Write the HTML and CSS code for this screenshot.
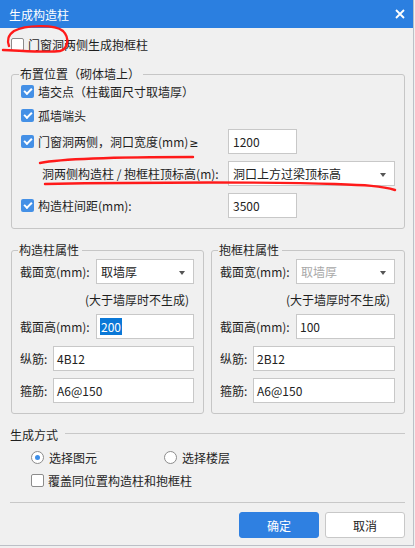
FILE: index.html
```html
<!DOCTYPE html>
<html lang="zh-CN">
<head>
<meta charset="UTF-8">
<title>生成构造柱</title>
<link rel="stylesheet" href="styles.css">
</head>
<body>
<div class="dialog">
  <!-- 标题栏 -->
  <div class="titlebar">
    <span>生成构造柱</span>
    <svg class="close" width="10" height="10" viewBox="0 0 10 10"><path d="M1 1L9 9M9 1L1 9" stroke="#fff" stroke-width="1.8"/></svg>
  </div>

  <div class="content">
    <div class="check top-check"><span class="box"></span>门窗洞两侧生成抱框柱</div>

    <!-- 布置位置 -->
    <fieldset class="group place">
      <legend>布置位置（砌体墙上）</legend>
      <div class="check row r1"><span class="box on"></span>墙交点（柱截面尺寸取墙厚）</div>
      <div class="check row r2"><span class="box on"></span>孤墙端头</div>
      <div class="field r3">
        <div class="check label-col"><span class="box on"></span><span>门窗洞两侧，洞口宽度(mm)<span class="ge">≥</span></span></div>
        <div class="input short">1200</div>
      </div>
      <div class="field">
        <div class="label-col sub">洞两侧构造柱 / 抱框柱顶标高(m):</div>
        <div class="select wide">洞口上方过梁顶标高<i class="arrow"></i></div>
      </div>
      <div class="field">
        <div class="check label-col"><span class="box on"></span>构造柱间距(mm):</div>
        <div class="input short">3500</div>
      </div>
    </fieldset>

    <!-- 属性 -->
    <div class="props">
      <fieldset class="group prop">
        <legend>构造柱属性</legend>
        <div class="pf"><span class="lbl">截面宽(mm):</span><div class="select">取墙厚<i class="arrow"></i></div></div>
        <div class="note">(大于墙厚时不生成)</div>
        <div class="pf"><span class="lbl">截面高(mm):</span><div class="input"><span class="sel">200</span></div></div>
        <div class="pf gap"><span class="lbl short">纵筋:</span><div class="input">4B12</div></div>
        <div class="pf gap"><span class="lbl short">箍筋:</span><div class="input">A6@150</div></div>
      </fieldset>
      <fieldset class="group prop">
        <legend>抱框柱属性</legend>
        <div class="pf"><span class="lbl">截面宽(mm):</span><div class="select disabled">取墙厚<i class="arrow"></i></div></div>
        <div class="note">(大于墙厚时不生成)</div>
        <div class="pf"><span class="lbl">截面高(mm):</span><div class="input">100</div></div>
        <div class="pf gap"><span class="lbl short">纵筋:</span><div class="input">2B12</div></div>
        <div class="pf gap"><span class="lbl short">箍筋:</span><div class="input">A6@150</div></div>
      </fieldset>
    </div>

    <!-- 生成方式 -->
    <div class="mode-title"><span>生成方式</span></div>
    <div class="radios">
      <div class="radio first"><span class="dot on"></span>选择图元</div>
      <div class="radio"><span class="dot"></span>选择楼层</div>
    </div>
    <div class="check cover"><span class="box"></span>覆盖同位置构造柱和抱框柱</div>

    <div class="sep"></div>
    <div class="buttons">
      <div class="btn primary">确定</div>
      <div class="btn">取消</div>
    </div>
  </div>

  <!-- 红色标注 -->
  <svg class="marks" width="414" height="548" viewBox="0 0 414 548">
    <path d="M3 50 C15 50 45 53 60 51 C68 49 70 38 63 31 C55 24 25 25 14 31 C8 35 7 41 9 46" fill="none" stroke="#ff1a1a" stroke-width="2.4" stroke-linecap="round"/>
    <path d="M40 163 C60 159 120 157 193 157" fill="none" stroke="#ff1a1a" stroke-width="2.4" stroke-linecap="round"/>
    <path d="M45 184 C150 182 280 182 335 184 C365 185 382 186 395 190" fill="none" stroke="#ff1a1a" stroke-width="2.4" stroke-linecap="round"/>
  </svg>
</div>
</body>
</html>
```

FILE: styles.css
```css
body {
  margin: 0;
  background: #f0f0f0;
  font-family: "Noto Sans CJK SC", "Microsoft YaHei", sans-serif;
  font-size: 12px;
  color: #1f1f1f;
}
.dialog {
  width: 414px;
  height: 546px;
  box-sizing: border-box;
  border-right: 1px solid #bcc0c7;
  border-bottom: 1px solid #bcc0c7;
  background: #f0f0f0;
  position: relative;
}
.titlebar {
  height: 28px;
  background: #2b7fe0;
  color: #fff;
  display: flex;
  align-items: center;
  justify-content: space-between;
  padding: 0 8px 0 9px;
}
.content {
  padding: 6px 8px 0 11px;
}

/* 复选框 */
.check {
  display: flex;
  align-items: center;
  gap: 4px;
}
.box {
  width: 13px;
  height: 13px;
  box-sizing: border-box;
  border: 1px solid #8c8c8c;
  border-radius: 2px;
  background: #fff;
  position: relative;
  flex: none;
}
.box.on {
  border: none;
  background: #4490e6;
}
.box.on::after {
  content: '';
  position: absolute;
  left: 3px;
  top: 3px;
  width: 6px;
  height: 3px;
  border-left: 2px solid #fff;
  border-bottom: 2px solid #fff;
  transform: rotate(-45deg);
}
.top-check { height: 20px; }
.ge {
  font-family: "DejaVu Sans", sans-serif;
  font-size: 11px;
  margin-left: 1px;
}

/* 分组框 */
.group {
  margin: 14px 0 0;
  padding: 0 9px 10px 9px;
  border: 1px solid #c6c6c6;
  border-radius: 3px;
  min-width: 0;
}
.group legend {
  line-height: 12px;
  padding: 0 3px 0 1px;
  margin-left: -2px;
}
.place .r1 { height: 23px; }
.place .r2 { height: 24px; }
.field {
  display: flex;
  align-items: center;
  height: 25px;
  margin-top: 7px;
}
.place .field.r3 { margin-top: 2px; }
.label-col {
  width: 207px;
  flex: none;
}
.label-col.sub { padding-left: 21px; box-sizing: border-box; }

.input, .select {
  height: 25px;
  box-sizing: border-box;
  border: 1px solid #c8c8c8;
  background: #fff;
  display: flex;
  align-items: center;
  padding-left: 3px;
  color: #222;
  flex: 1;
  min-width: 0;
}
.input.short { flex: none; width: 69px; padding-left: 4px; }
.select { position: relative; padding-left: 4px; }
.select.wide { flex: none; width: 167px; }
.select.disabled { color: #a8a8a8; }
.arrow {
  position: absolute;
  right: 8px;
  top: 11px;
  border-left: 3px solid transparent;
  border-right: 3px solid transparent;
  border-top: 4px solid #555;
}
.sel {
  background: #0a78d7;
  color: #fff;
  padding: 0 1px;
  line-height: 17px;
}

/* 属性 */
.props {
  display: grid;
  grid-template-columns: 193px 194px;
  column-gap: 7px;
  margin-top: 15px;
}
.props .group {
  margin: 0;
  padding: 3px 9px 10px 8px;
}
.pf {
  display: flex;
  align-items: center;
  height: 25px;
}
.pf.gap { margin-top: 7px; }
.lbl { width: 76px; flex: none; }
.lbl.short { width: 33px; }
.note {
  height: 30px;
  display: flex;
  align-items: center;
  justify-content: flex-end;
  padding-right: 5px;
}

/* 生成方式 */
.mode-title {
  display: flex;
  align-items: flex-start;
  margin: 13px 0 0 -1px;
  line-height: 16px;
}
.mode-title::after {
  content: '';
  flex: 1;
  border-top: 1px solid #c8c8c8;
  margin: 6px 0 0 7px;
}
.radios {
  display: flex;
  height: 20px;
  margin-top: 4px;
  padding-left: 20px;
}
.radio {
  display: flex;
  align-items: center;
  gap: 5px;
}
.radio.first { width: 133px; }
.dot {
  width: 13px;
  height: 13px;
  box-sizing: border-box;
  border: 1px solid #8c8c8c;
  border-radius: 50%;
  background: #fff;
  position: relative;
}
.dot.on::after {
  content: '';
  position: absolute;
  left: 3px;
  top: 3px;
  width: 5px;
  height: 5px;
  border-radius: 50%;
  background: #3d8ee8;
}
.cover {
  height: 20px;
  margin-top: 3px;
  padding-left: 20px;
}
.sep {
  border-top: 1px solid #c8c8c8;
  margin: 12px 0 0 -1px;
}
.buttons {
  display: flex;
  justify-content: flex-end;
  gap: 6px;
  margin-top: 9px;
}
.btn {
  width: 80px;
  height: 26px;
  box-sizing: border-box;
  border: 1px solid #c8c8c8;
  border-radius: 3px;
  background: #fff;
  display: flex;
  align-items: center;
  justify-content: center;
  color: #222;
}
.btn.primary {
  background: #2f80e1;
  border-color: #2f80e1;
  color: #fff;
}

.marks {
  position: absolute;
  left: 0;
  top: 0;
  pointer-events: none;
}
```
